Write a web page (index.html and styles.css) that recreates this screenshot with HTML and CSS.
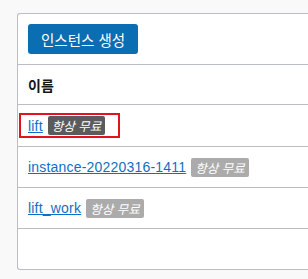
FILE: index.html
```html
<!DOCTYPE html>
<html lang="ko">

<head>
  <meta charset="UTF-8">
  <meta name="viewport" content="width=device-width, initial-scale=1.0">
  <title>인스턴스</title>
  <link rel="stylesheet" href="styles.css">
</head>

<body>
  <section class="panel">
    <div class="toolbar">
      <button class="btn-create">인스턴스 생성</button>
    </div>

    <div class="list">
      <div class="row head">이름</div>

      <div class="row">
        <span class="marked">
          <a href="#">lift</a>
          <span class="badge dark">항상 무료</span>
        </span>
      </div>

      <div class="row">
        <a href="#">instance-20220316-1411</a>
        <span class="badge">항상 무료</span>
      </div>

      <div class="row">
        <a href="#">lift_work</a>
        <span class="badge">항상 무료</span>
      </div>
    </div>
  </section>
</body>

</html>
```

FILE: styles.css
```css
body {
  margin: 0;
  padding: 13px 0 0 17px;
  background-color: #f9f9f9;
  font-family: "Liberation Sans", "Noto Sans CJK KR", sans-serif;
  font-size: 14px;
  color: #161616;
  overflow: hidden;
}

.panel {
  background-color: white;
  border: 1px solid #babdc2;
  border-right: 0;
  border-radius: 3px 0 0 3px;
  padding-bottom: 40px;
}

.toolbar {
  padding: 10px;
  border-bottom: 1px solid #babdc2;
}

.btn-create {
  height: 30px;
  padding: 0 13px;
  border: 0;
  border-radius: 3px;
  background-color: #0b6db2;
  color: white;
  font-family: "Noto Sans CJK KR", sans-serif;
  font-size: 14.5px;
  cursor: pointer;
}

.row {
  display: flex;
  align-items: center;
  height: 40px;
  padding: 0 10px;
  border-bottom: 1px solid #babdc2;

  &.head {
    height: 39px;
    font-family: "Noto Sans CJK KR", sans-serif;
    font-weight: bold;
  }

  a {
    color: #0f6fc6;
    text-decoration: underline;
    letter-spacing: 0.2px;
  }
}

.row:nth-child(2) {
  height: 41px;
}

.marked {
  display: inline-flex;
  align-items: center;
  margin-left: -9px;
  padding: 1px 13px 1px 7px;
  border: 2px solid #e3131d;
}

.badge {
  display: inline-block;
  margin-left: 5px;
  padding: 0 4px;
  height: 19px;
  line-height: 19px;
  border-radius: 2px;
  background-color: #ababab;
  color: white;
  font-family: "Noto Sans CJK KR", sans-serif;
  font-size: 12.5px;
  font-style: italic;

  &.dark {
    background-color: #595b5d;
  }
}
```
